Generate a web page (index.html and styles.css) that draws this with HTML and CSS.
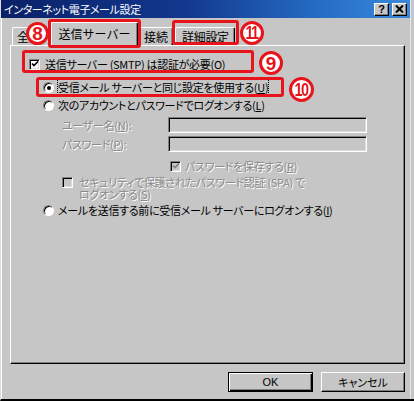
FILE: index.html
```html
<!DOCTYPE html>
<html lang="ja">
<head>
<meta charset="utf-8">
<title>インターネット電子メール設定</title>
<link rel="stylesheet" href="styles.css">
</head>
<body>
<div class="window">
  <div class="titlebar">
    <span class="title">インターネット電子メール設定</span>
    <div class="tbtns">
      <span class="tbtn">?</span>
      <span class="tbtn tx">
        <svg width="9" height="8" viewBox="0 0 9 8"><path d="M1 0.5 L8 7.5 M8 0.5 L1 7.5" stroke="#000" stroke-width="2"/></svg>
      </span>
    </div>
  </div>

  <div class="tabs">
    <div class="tab t-gen">全般</div>
    <div class="tab sel">送信サーバー</div>
    <div class="tab t-conn">接続</div>
    <div class="tab t-adv">詳細設定</div>
  </div>

  <div class="panel">
    <div class="row r1">
      <span class="cb on"><svg width="8" height="8" viewBox="0 0 8 8"><path d="M1 3.5 L3 5.5 L7 1.5" stroke="#000" stroke-width="1.6" fill="none"/></svg></span>
      <span class="lbl">送信サーバー (SMTP) は認証が必要(<u>O</u>)</span>
    </div>
    <div class="row r2">
      <span class="rb on"></span>
      <span class="lbl focus">受信メール サーバーと同じ設定を使用する(<u>U</u>)</span>
    </div>
    <div class="row r3">
      <span class="rb"></span>
      <span class="lbl">次のアカウントとパスワードでログオンする(<u>L</u>)</span>
    </div>
    <div class="row r4">
      <span class="flabel dis">ユーザー名(<u>N</u>):</span>
      <span class="field"></span>
    </div>
    <div class="row r5">
      <span class="flabel dis">パスワード(<u>P</u>):</span>
      <span class="field"></span>
    </div>
    <div class="row r6">
      <span class="cb dim"><svg width="8" height="8" viewBox="0 0 8 8"><path d="M1 3.5 L3 5.5 L7 1.5" stroke="#808080" stroke-width="1.6" fill="none"/></svg></span>
      <span class="lbl dis">パスワードを保存する(<u>R</u>)</span>
    </div>
    <div class="row r7">
      <span class="cb dim"></span>
      <span class="lbl dis two">セキュリティで保護されたパスワード認証 (SPA) で<br>ログオンする(<u>S</u>)</span>
    </div>
    <div class="row r8">
      <span class="rb"></span>
      <span class="lbl">メールを送信する前に受信メール サーバーにログオンする(<u>I</u>)</span>
    </div>
  </div>

  <div class="buttons">
    <div class="btn def"><span>OK</span></div>
    <div class="btn"><span>キャンセル</span></div>
  </div>

  <div class="box boxA"></div>
  <div class="box boxB"></div>
  <div class="box box9"></div>
  <div class="box box10"></div>
  <div class="num c8">8</div>
  <div class="num c11"><span>11</span></div>
  <div class="num c9">9</div>
  <div class="num c10"><span>10</span></div>
</div>
</body>
</html>
```

FILE: styles.css
```css
* { box-sizing: border-box; }
html, body { margin: 0; padding: 0; background: #c6c6c6; }
body {
  width: 414px;
  height: 401px;
  overflow: hidden;
  font-family: "Noto Sans CJK JP", "Noto Sans", sans-serif;
  font-feature-settings: "palt";
  color: #000;
}
u { text-decoration: underline; text-underline-offset: 1px; }

.window {
  position: relative;
  width: 414px;
  height: 401px;
  background: #c6c6c6;
  border-left: 1px solid #dcdcdc;
  border-bottom: 2px solid #000;
  box-shadow: inset 1px 0 0 #fff, inset -3px 0 0 #c6c6c6, inset -4px 0 0 #e6e6e6;
  display: flex;
  flex-direction: column;
}

.titlebar {
  height: 18px;
  width: 409px;
  background: linear-gradient(to right, #0a2168 0%, #12388e 45%, #2770c8 80%, #3a88dc 100%);
  display: flex;
  align-items: center;
  justify-content: space-between;
  padding: 0 3px 0 3px;
  color: #fff;
}
.title {
  font-size: 11px;
  line-height: 18px;
  letter-spacing: -0.4px;
}
.tbtns { display: flex; gap: 3px; }
.tbtn {
  width: 15px;
  height: 13px;
  background: #c6c6c6;
  border-top: 1px solid #fff;
  border-left: 1px solid #fff;
  border-right: 1px solid #000;
  border-bottom: 1px solid #000;
  box-shadow: inset -1px -1px 0 #808080;
  color: #000;
  font-family: "Liberation Sans", sans-serif;
  font-weight: bold;
  font-size: 11px;
  line-height: 11px;
  display: flex;
  align-items: center;
  justify-content: center;
}

.tabs {
  height: 27px;
  display: flex;
  align-items: flex-end;
  padding-left: 11px;
  position: relative;
  z-index: 2;
  font-feature-settings: "palt" 0;
}
.tab {
  font-size: 12px;
  height: 18px;
  line-height: 17px;
  border-top: 1px solid #fff;
  border-left: 1px solid #fff;
  border-right: 1px solid #000;
  box-shadow: inset -1px 0 0 #808080;
  border-radius: 2px 2px 0 0;
  padding: 0 4px;
  white-space: nowrap;
  overflow: hidden;
}
.t-gen { width: 39px; }
.sel {
  width: 87px;
  height: 24px;
  line-height: 22px;
  margin-bottom: -1px;
  text-align: center;
  background: #c6c6c6;
  padding: 0;
}
.t-conn { width: 35px; padding-left: 5px; }
.t-adv { width: 60px; margin-left: 2px; padding-left: 6px; letter-spacing: -0.3px; }

.panel {
  margin-left: 9px;
  width: 395px;
  height: 319px;
  border-top: 1px solid #fff;
  border-left: 1px solid #fff;
  border-right: 1px solid #000;
  border-bottom: 1px solid #000;
  box-shadow: inset -1px -1px 0 #808080;
  display: flex;
  flex-direction: column;
  font-size: 11px;
  letter-spacing: -0.3px;
}

.row { display: flex; align-items: center; white-space: nowrap; }
.r1 { height: 20px; margin-top: 8px; padding-left: 18px; }
.r2 { height: 18px; margin-top: 4px; padding-left: 32px; }
.r3 { height: 18px; margin-top: 0; padding-left: 32px; }
.r4 { height: 16px; margin-top: 3px; padding-left: 51px; }
.r5 { height: 16px; margin-top: 3px; padding-left: 51px; }
.r6 { height: 16px; margin-top: 6px; padding-left: 159px; }
.r7 { height: 24px; margin-top: 2px; padding-left: 51px; align-items: flex-start; }
.r8 { height: 18px; margin-top: 1px; padding-left: 32px; }

.lbl { line-height: 14px; }
.r1 .lbl { margin-left: 5px; }
.r2 .lbl, .r3 .lbl, .r8 .lbl { margin-left: 4px; }
.r6 .lbl { margin-left: 4px; }
.r7 .lbl { margin-left: 6px; line-height: 12px; }
.focus { outline: 1px dotted #000; outline-offset: 0; }

.dis { color: #8a8a8a; text-shadow: 1px 1px 0 #fff; }

.cb {
  width: 11px;
  height: 11px;
  background: #fff;
  border-top: 1px solid #808080;
  border-left: 1px solid #808080;
  border-right: 1px solid #fff;
  border-bottom: 1px solid #fff;
  box-shadow: inset 1px 1px 0 #000, inset -1px -1px 0 #dcdcdc;
  display: flex;
  align-items: center;
  justify-content: center;
  flex: none;
}
.cb.dim { background: #c6c6c6; }
.r7 .cb { margin-top: 1px; }

.rb {
  width: 11px;
  height: 11px;
  border-radius: 50%;
  background: #fff;
  border: 1px solid;
  border-color: #808080 #fff #fff #808080;
  box-shadow: inset 1px 1px 0 #000;
  flex: none;
  position: relative;
}
.rb.on::after {
  content: "";
  position: absolute;
  left: 3px;
  top: 3px;
  width: 4px;
  height: 4px;
  border-radius: 50%;
  background: #000;
}

.flabel { width: 106px; flex: none; }
.field {
  width: 199px;
  height: 16px;
  background: #c6c6c6;
  border-top: 1px solid #808080;
  border-left: 1px solid #808080;
  border-right: 1px solid #fff;
  border-bottom: 1px solid #fff;
  box-shadow: inset 1px 1px 0 #000, inset -1px -1px 0 #dcdcdc;
}

.buttons {
  display: flex;
  justify-content: flex-end;
  gap: 8px;
  padding-right: 9px;
  margin-top: 8px;
}
.btn {
  width: 85px;
  height: 20px;
  font-size: 11px;
  display: flex;
  align-items: center;
  justify-content: center;
  border-top: 1px solid #fff;
  border-left: 1px solid #fff;
  border-right: 1px solid #000;
  border-bottom: 1px solid #000;
  box-shadow: inset -1px -1px 0 #808080;
}
.btn.def {
  border: 1px solid #000;
  box-shadow: inset 1px 1px 0 #fff, inset -1px -1px 0 #000, inset -2px -2px 0 #808080;
  font-family: "Liberation Sans", sans-serif;
}
.btn:last-child { width: 84px; }

.box {
  position: absolute;
  border: 3px solid #e8141c;
  border-radius: 3px;
  z-index: 5;
}
.boxA { left: 47px; top: 19px; width: 93px; height: 29px; }
.boxB { left: 171px; top: 20px; width: 67px; height: 25px; }
.box9 { left: 21px; top: 50px; width: 232px; height: 23px; }
.box10 { left: 35px; top: 77px; width: 248px; height: 20px; }

.num {
  position: absolute;
  z-index: 6;
  border: 3px solid #e8141c;
  border-radius: 50%;
  background: #fff;
  color: #e8141c;
  font-family: "Liberation Sans", sans-serif;
  font-weight: bold;
  display: flex;
  align-items: center;
  justify-content: center;
  line-height: 1;
}
.num span { display: inline-block; transform: scaleX(0.8); }
.c8 { left: 25px; top: 22px; width: 23px; height: 23px; font-size: 19px; }
.c11 { left: 239px; top: 21px; width: 24px; height: 24px; font-size: 18px; letter-spacing: -2px; }
.c9 { left: 258px; top: 51px; width: 24px; height: 24px; font-size: 19px; }
.c10 { left: 288px; top: 77px; width: 25px; height: 25px; font-size: 18px; letter-spacing: -2px; }
```
